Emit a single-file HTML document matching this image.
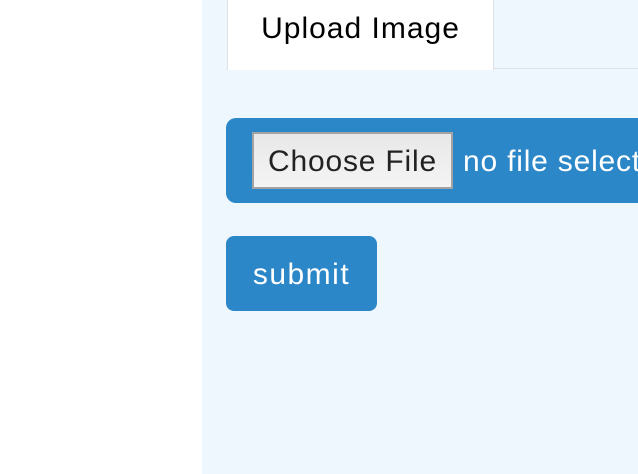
<!DOCTYPE html>
<html><head><style>
html,body{margin:0;width:638px;height:474px;overflow:hidden}
body{background:#fff;font-family:"Liberation Sans",Arial,sans-serif;position:relative}
.bg{position:absolute;left:202px;top:0;width:436px;height:474px;background:#eef6fe;overflow:hidden}
.tab{position:absolute;left:25px;top:0;width:267px;height:70px;background:#fff;border-left:1px solid #dde2e8;border-right:1px solid #dde2e8;box-sizing:border-box;font-size:30px;letter-spacing:1px;color:#000;text-align:center;line-height:58px}
.line{position:absolute;left:292px;top:68px;width:144px;height:1px;background:#dde2e8}
.bar{position:absolute;left:24px;top:118px;width:412px;height:85px;background:#2b87c8;border-radius:10px 0 0 10px}
.cf{position:absolute;left:50px;top:132px;width:201px;height:57px;box-sizing:border-box;border:2px solid #a3a3a3;background:linear-gradient(#e8e8e8,#f4f4f4);font-size:30px;letter-spacing:0.8px;color:#222;text-align:center;line-height:56px}
.nf{position:absolute;left:261px;top:133px;width:175px;overflow:hidden;line-height:58px;font-size:30px;letter-spacing:0.8px;color:#fff;white-space:nowrap}
.sb{position:absolute;left:24px;top:236px;width:151px;height:75px;background:#2b87c8;border-radius:8px;color:#fff;font-size:30px;letter-spacing:1.5px;text-align:center;line-height:78px}
</style></head><body>
<div class="bg">
<div class="tab">Upload Image</div>
<div class="line"></div>
<div class="bar"></div>
<div class="cf">Choose File</div>
<div class="nf">no file selected</div>
<div class="sb">submit</div>
</div>
</body></html>
